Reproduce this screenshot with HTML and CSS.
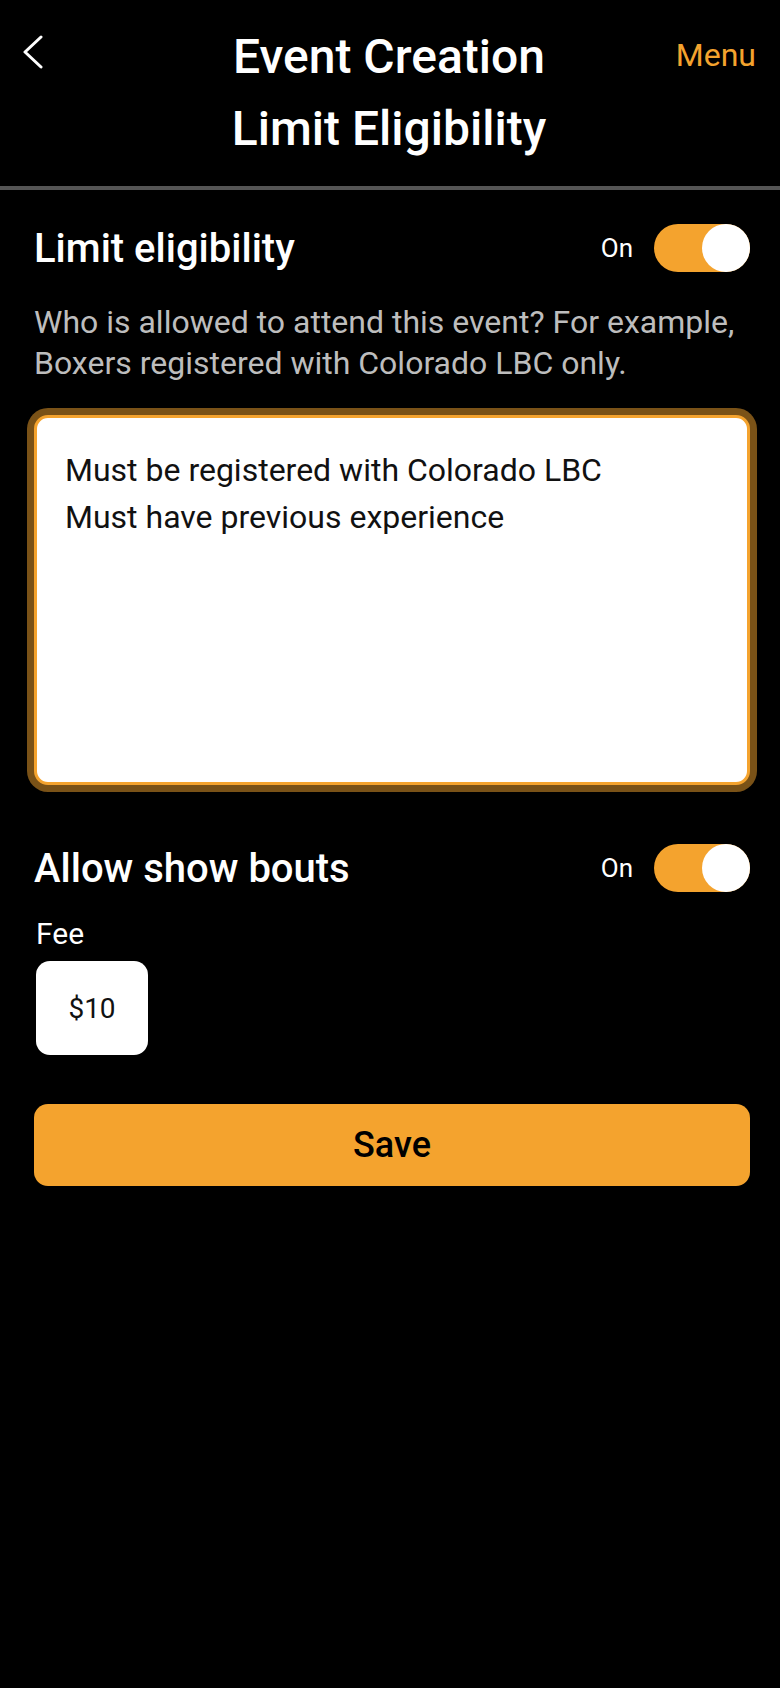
FILE: index.html
```html
<!DOCTYPE html>
<html>
<head>
    <title>Limit Eligibility</title>
    <link rel="stylesheet" href="styles.css">
</head>
<body>
    <header class="top-bar">
        <a class="back-btn" href="#">
            <svg width="22" height="34" viewBox="0 0 22 34">
                <path d="M19 2 L3 17 L19 32" fill="none" stroke="#fff" stroke-width="3" stroke-linecap="round" stroke-linejoin="round"/>
            </svg>
        </a>
        <h1 class="page-title">Event Creation<br>Limit Eligibility</h1>
        <a class="menu-link" href="#">Menu</a>
    </header>

    <main class="content">
        <div class="setting-row">
            <h2>Limit eligibility</h2>
            <div class="toggle-wrap">
                <span class="toggle-label">On</span>
                <span class="toggle on"><span class="knob"></span></span>
            </div>
        </div>
        <p class="hint">Who is allowed to attend this event? For example, Boxers registered with Colorado LBC only.</p>

        <textarea class="rules-box">Must be registered with Colorado LBC
Must have previous experience</textarea>

        <div class="setting-row second">
            <h2>Allow show bouts</h2>
            <div class="toggle-wrap">
                <span class="toggle-label">On</span>
                <span class="toggle on"><span class="knob"></span></span>
            </div>
        </div>

        <div class="fee-group">
            <label class="fee-label">Fee</label>
            <div class="fee-box">$10</div>
        </div>

        <button class="save-btn" type="button">Save</button>
    </main>
</body>
</html>
```

FILE: styles.css
```css
body {
    margin: 0;
    background-color: #000;
    color: #fff;
    font-family: Roboto, "Noto Sans", Arial, sans-serif;
}
.top-bar {
    display: grid;
    grid-template-columns: 1fr auto 1fr;
    align-items: start;
    padding: 21px 24px 21px 22px;
    border-bottom: 4px solid #555;
}
.back-btn {
    display: block;
    width: 22px;
    height: 34px;
    margin-top: 14px;
}
.back-btn svg {
    display: block;
}
.page-title {
    margin: 0;
    font-size: 48px;
    font-weight: 500;
    line-height: 72px;
    text-align: center;
}
.menu-link {
    justify-self: end;
    color: #f4a32e;
    text-decoration: none;
    font-size: 32px;
    line-height: 68px;
}
.content {
    padding: 34px 30px 0 34px;
}
.setting-row {
    display: flex;
    justify-content: space-between;
    align-items: center;
    height: 48px;
}
.setting-row h2 {
    margin: 0;
    font-size: 40px;
    font-weight: 500;
}
.setting-row.second {
    margin-top: 59px;
}
.toggle-wrap {
    display: flex;
    align-items: center;
    gap: 21px;
}
.toggle-label {
    font-size: 26px;
}
.toggle {
    display: flex;
    justify-content: flex-end;
    width: 96px;
    height: 48px;
    border-radius: 24px;
    background-color: #f4a32e;
}
.knob {
    width: 48px;
    height: 48px;
    border-radius: 50%;
    background-color: #fff;
}
.hint {
    margin: 30px 0 31px;
    font-size: 32px;
    line-height: 41px;
    color: #bdbdbd;
}
.rules-box {
    display: block;
    box-sizing: border-box;
    width: 100%;
    height: 370px;
    padding: 29px 28px;
    border: 3px solid #f4a32e;
    border-radius: 14px;
    box-shadow: 0 0 0 7px rgba(244, 163, 46, 0.5);
    background-color: #fff;
    color: #111;
    font-family: Roboto, "Noto Sans", Arial, sans-serif;
    font-size: 32px;
    line-height: 47px;
    resize: none;
    outline: none;
    overflow: hidden;
}
.fee-group {
    margin-top: 25px;
    padding-left: 2px;
}
.fee-label {
    display: block;
    font-size: 30px;
    line-height: 34px;
}
.fee-box {
    display: flex;
    justify-content: center;
    align-items: center;
    width: 112px;
    height: 94px;
    margin-top: 10px;
    border-radius: 14px;
    background-color: #fff;
    color: #111;
    font-size: 28px;
}
.save-btn {
    display: block;
    width: 100%;
    height: 82px;
    margin-top: 49px;
    border: none;
    border-radius: 14px;
    background-color: #f4a32e;
    color: #000;
    font-family: Roboto, "Noto Sans", Arial, sans-serif;
    font-size: 36px;
    font-weight: 500;
    cursor: pointer;
}
```
